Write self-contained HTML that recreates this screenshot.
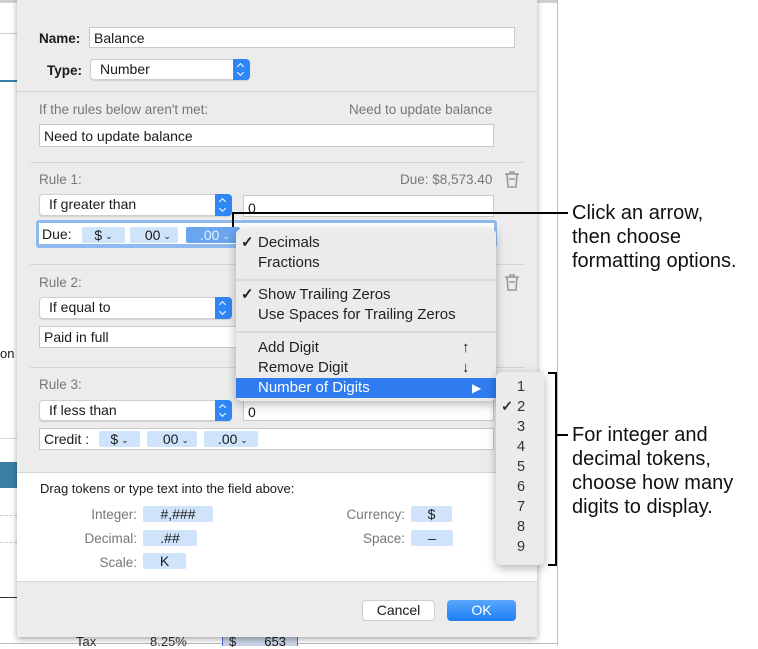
<!DOCTYPE html>
<html><head><meta charset="utf-8"><style>
*{box-sizing:border-box;margin:0;padding:0}
body{width:758px;height:646px;background:#fff;position:relative;overflow:hidden;font-family:"Liberation Sans",Arial,sans-serif;font-size:13.5px;color:#1a1a1a}
.a{position:absolute}
.fld{position:absolute;background:#fff;border:1px solid #c9c9c9;padding-left:4px;line-height:20px;font-size:14px}
.pop{position:absolute;background:#fff;border:1px solid #cfcfcf;border-radius:4px;padding-left:9px;line-height:19px;font-size:14px;box-shadow:0 1px 1px rgba(0,0,0,.12)}
.pop .st{position:absolute;right:-1px;top:-1px;bottom:-1px;width:17px;background:#2f86f5;border-radius:0 4px 4px 0}
.pop .st:before{content:"";position:absolute;left:5px;top:5px;width:4px;height:4px;border-left:1.3px solid #fff;border-top:1.3px solid #fff;transform:rotate(45deg)}
.pop .st:after{content:"";position:absolute;left:5px;bottom:5px;width:4px;height:4px;border-right:1.3px solid #fff;border-bottom:1.3px solid #fff;transform:rotate(45deg)}
.gray{color:#777}
.sep{position:absolute;left:30px;width:495px;height:1px;background:#d6d6d6}
.tok{position:absolute;background:#cfe4fb;height:16px;line-height:16px;text-align:center;font-size:14px;border-radius:2px}
.car{font-size:9px;vertical-align:1px;margin-left:3px}
.mi{position:absolute;left:0;width:100%;height:20px;line-height:20px;padding-left:22px;font-size:15px;color:#222}
.ck{position:absolute;left:5px;font-weight:bold}
.bl{position:absolute;background:#000}
.cap{position:absolute;font-size:20px;line-height:24px;color:#111}
</style></head><body>
<div class="a" style="left:0;top:0;width:558px;height:3px;background:#cfcfcf"></div>
<div class="a" style="left:557px;top:0;width:1px;height:646px;background:#bdbdbd"></div>
<div class="a" style="left:0;top:33px;width:17px;height:1px;background:#ccc"></div>
<div class="a" style="left:0;top:80px;width:17px;height:2px;background:#3a7fad"></div>
<div class="a" style="left:0;top:346px;font-size:13px">on H</div>
<div class="a" style="left:0;top:438px;width:17px;height:1px;background:#ddd"></div>
<div class="a" style="left:0;top:462px;width:17px;height:26px;background:#3b7ea6"></div>
<div class="a" style="left:0;top:515px;width:17px;height:1px;border-top:1px dashed #ccc"></div>
<div class="a" style="left:0;top:542px;width:17px;height:1px;border-top:1px dashed #ccc"></div>
<div class="a" style="left:0;top:597px;width:17px;height:1px;background:#333"></div>
<div class="a" style="left:0;top:643px;width:558px;height:1px;background:#bbb"></div>
<div class="a" style="left:76px;top:634px;font-size:13px;color:#333">Tax</div>
<div class="a" style="left:150px;top:634px;font-size:13px;color:#333">8.25%</div>
<div class="a" style="left:222px;top:634px;width:76px;height:12px;background:#c9d3e6;border-left:1px solid #4a6fc0;border-right:1px solid #4a6fc0;font-size:13px;padding-left:6px">$<span style="margin-left:28px">653</span></div>

<div class="a" style="left:17px;top:0;width:520px;height:637px;background:#ececec;box-shadow:0 2px 6px rgba(0,0,0,.35)"></div>
<div class="a" style="left:17px;top:91px;width:520px;height:1px;background:#d4d4d4"></div>
<div class="a" style="left:39px;top:31px;font-weight:bold;font-size:13.5px">Name:</div>
<div class="fld" style="left:89px;top:27px;width:426px;height:21px">Balance</div>
<div class="a" style="left:47px;top:63px;font-weight:bold">Type:</div>
<div class="pop" style="left:90px;top:59px;width:160px;height:21px">Number<div class="st"></div></div>

<div class="a gray" style="left:39px;top:102px">If the rules below aren't met:</div>
<div class="a gray" style="left:349px;top:102px">Need to update balance</div>
<div class="fld" style="left:39px;top:124px;width:455px;height:23px;line-height:22px">Need to update balance</div>

<div class="sep" style="top:162px"></div>
<div class="a gray" style="left:39px;top:172px">Rule 1:</div>
<div class="a gray" style="left:400px;top:172px">Due: $8,573.40</div>
<svg class="a" style="left:504px;top:170px" width="16" height="18" viewBox="0 0 16 18"><g fill="none" stroke="#999" stroke-width="1.6"><path d="M1 4h14M6 4V2h4v2M3 4l1 13h8l1-13M5 9h6"/></g></svg>
<div class="pop" style="left:39px;top:194px;width:193px;height:22px">If greater than<div class="st"></div></div>
<div class="fld" style="left:243px;top:195px;width:251px;height:22px;line-height:24px">0</div>
<div class="a" style="left:36px;top:220px;width:461px;height:28px;background:#8fb9ef;border-radius:3px"></div>
<div class="a" style="left:39px;top:223px;width:455px;height:21px;background:#fff"></div>
<div class="a" style="left:42px;top:226px;font-size:14px">Due:</div>
<div class="tok" style="left:82px;top:227px;width:43px">$<span class="car">&#8964;</span></div>
<div class="tok" style="left:130px;top:227px;width:48px">&nbsp;&nbsp;00<span class="car">&#8964;</span></div>
<div class="tok" style="left:186px;top:227px;width:54px;background:#6aa5ef;color:#e8f1fd">&nbsp;.00<span class="car">&#8964;</span></div>

<div class="sep" style="top:264px"></div>
<div class="a gray" style="left:39px;top:275px">Rule 2:</div>
<svg class="a" style="left:504px;top:273px" width="16" height="18" viewBox="0 0 16 18"><g fill="none" stroke="#999" stroke-width="1.6"><path d="M1 4h14M6 4V2h4v2M3 4l1 13h8l1-13M5 9h6"/></g></svg>
<div class="pop" style="left:39px;top:297px;width:193px;height:22px">If equal to<div class="st"></div></div>
<div class="fld" style="left:39px;top:326px;width:455px;height:22px">Paid in full</div>

<div class="sep" style="top:367px"></div>
<div class="a gray" style="left:39px;top:377px">Rule 3:</div>
<div class="pop" style="left:39px;top:400px;width:193px;height:21px">If less than<div class="st"></div></div>
<div class="fld" style="left:243px;top:399px;width:251px;height:22px;line-height:24px">0</div>
<div class="fld" style="left:39px;top:428px;width:455px;height:22px">Credit :</div>
<div class="tok" style="left:99px;top:431px;width:41px">$<span class="car">&#8964;</span></div>
<div class="tok" style="left:147px;top:431px;width:50px">&nbsp;&nbsp;00<span class="car">&#8964;</span></div>
<div class="tok" style="left:204px;top:431px;width:54px">&nbsp;.00<span class="car">&#8964;</span></div>

<div class="a" style="left:17px;top:472px;width:520px;height:110px;background:#fff;border-top:1px solid #d6d6d6;border-bottom:1px solid #d6d6d6"></div>
<div class="a" style="left:40px;top:481px;font-size:13px">Drag tokens or type text into the field above:</div>
<div class="a gray" style="left:60px;top:507px;width:77px;text-align:right">Integer:</div>
<div class="tok" style="left:143px;top:506px;width:70px">#,###</div>
<div class="a gray" style="left:60px;top:531px;width:77px;text-align:right">Decimal:</div>
<div class="tok" style="left:143px;top:530px;width:54px">.##</div>
<div class="a gray" style="left:60px;top:555px;width:77px;text-align:right">Scale:</div>
<div class="tok" style="left:143px;top:553px;width:43px">K</div>
<div class="a gray" style="left:320px;top:507px;width:85px;text-align:right">Currency:</div>
<div class="tok" style="left:411px;top:506px;width:41px">$</div>
<div class="a gray" style="left:320px;top:531px;width:85px;text-align:right">Space:</div>
<div class="tok" style="left:411px;top:530px;width:42px">–</div>

<div class="a" style="left:362px;top:600px;width:73px;height:21px;background:#fff;border:1px solid #cfcfcf;border-radius:4px;text-align:center;line-height:19px;font-size:14px">Cancel</div>
<div class="a" style="left:447px;top:600px;width:69px;height:21px;background:linear-gradient(#5aa6fb,#1b7ef5);border-radius:4px;text-align:center;line-height:21px;font-size:14px;color:#fff">OK</div>

<div class="a" style="left:236px;top:229px;width:260px;height:172px;background:#ebebeb;border-radius:5px;box-shadow:0 3px 10px rgba(0,0,0,.3)">
<div class="mi" style="top:4px"><span class="ck">✓</span>Decimals</div>
<div class="mi" style="top:24px">Fractions</div>
<div class="a" style="left:0;top:50px;width:260px;height:2px;background:#d9d9d9"></div>
<div class="mi" style="top:56px"><span class="ck">✓</span>Show Trailing Zeros</div>
<div class="mi" style="top:76px">Use Spaces for Trailing Zeros</div>
<div class="a" style="left:0;top:102px;width:260px;height:2px;background:#d9d9d9"></div>
<div class="mi" style="top:109px">Add Digit<span class="a" style="left:226px">↑</span></div>
<div class="mi" style="top:129px">Remove Digit<span class="a" style="left:226px">↓</span></div>
<div class="mi" style="top:149px;background:#2f7bf0;color:#fff">Number of Digits<span class="a" style="left:236px;font-size:12px">▶</span></div>
</div>
<div class="a" style="left:496px;top:372px;width:48px;height:193px;background:#ebebeb;border-radius:5px;box-shadow:0 3px 10px rgba(0,0,0,.3);font-size:14.5px;color:#333">
<div class="a" style="left:21px;top:7px">1</div>
<div class="a" style="left:5px;top:27px"><b>✓</b>&nbsp;2</div>
<div class="a" style="left:21px;top:47px">3</div>
<div class="a" style="left:21px;top:67px">4</div>
<div class="a" style="left:21px;top:87px">5</div>
<div class="a" style="left:21px;top:107px">6</div>
<div class="a" style="left:21px;top:127px">7</div>
<div class="a" style="left:21px;top:147px">8</div>
<div class="a" style="left:21px;top:167px">9</div>
</div>

<div class="bl" style="left:232px;top:212px;width:2px;height:15px"></div>
<div class="bl" style="left:232px;top:212px;width:336px;height:2px"></div>
<div class="cap" style="left:572px;top:201px">Click an arrow,<br>then choose<br>formatting options.</div>
<div class="bl" style="left:555px;top:372px;width:2px;height:194px"></div>
<div class="bl" style="left:548px;top:372px;width:8px;height:2px"></div>
<div class="bl" style="left:548px;top:564px;width:8px;height:2px"></div>
<div class="bl" style="left:556px;top:434px;width:12px;height:2px"></div>
<div class="cap" style="left:572px;top:423px">For integer and<br>decimal tokens,<br>choose how many<br>digits to display.</div>
</body></html>
